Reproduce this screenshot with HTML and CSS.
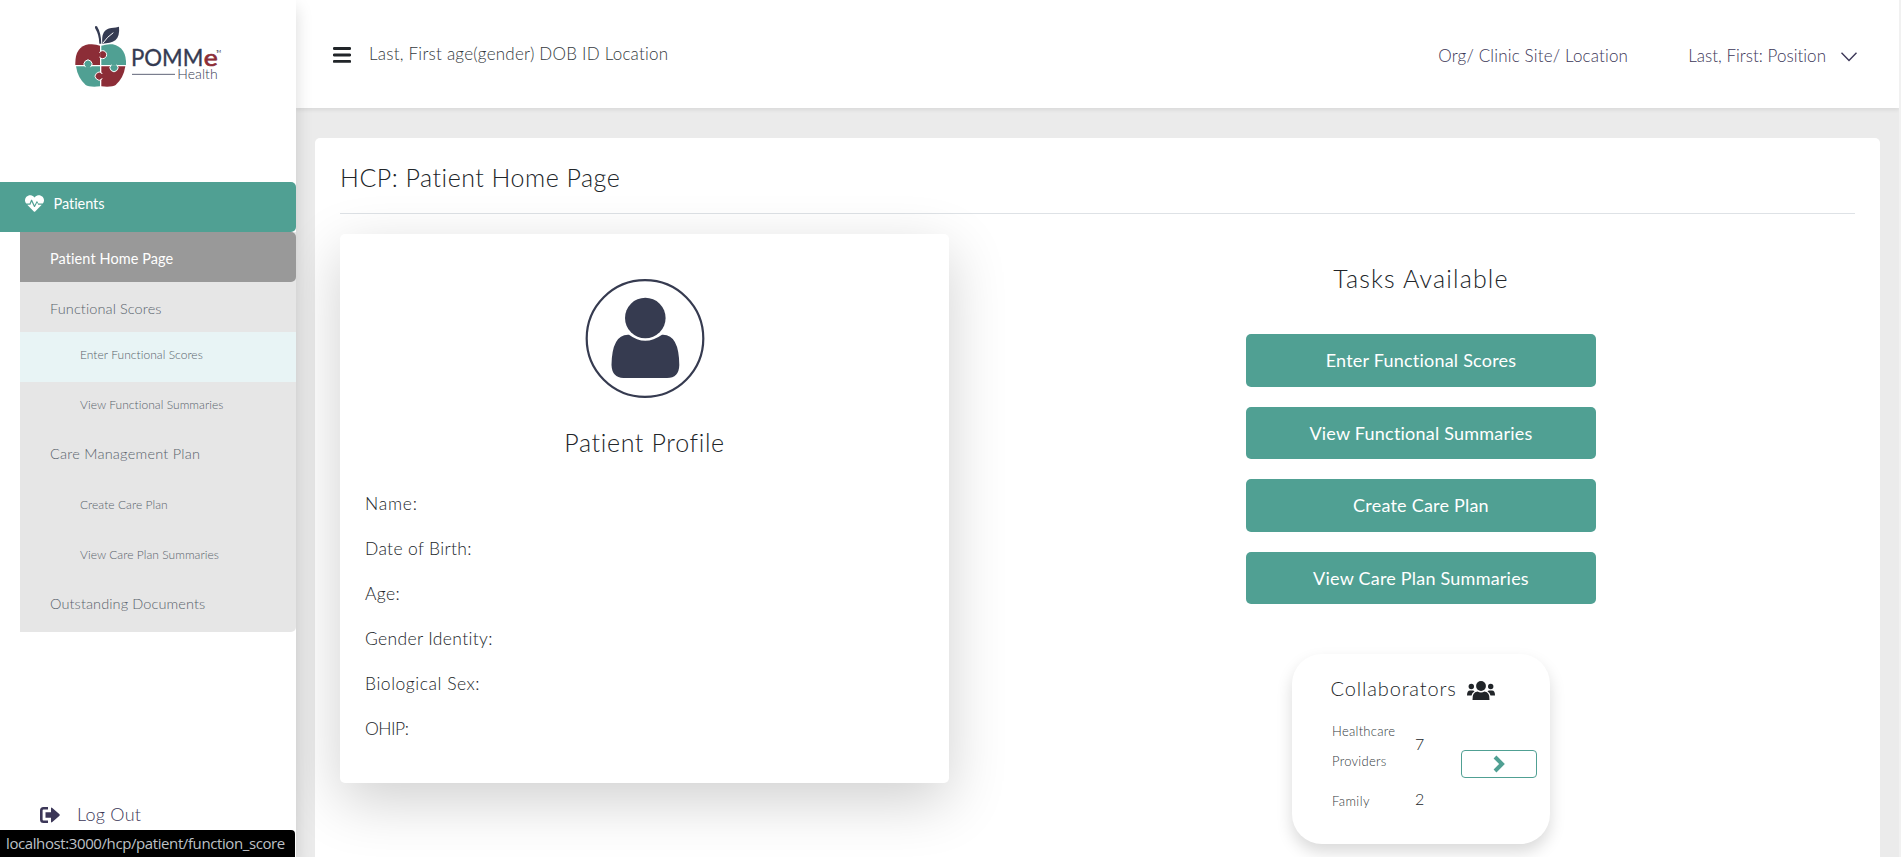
FILE: index.html
```html
<!DOCTYPE html>
<html lang="en">
<head>
<meta charset="utf-8">
<title>HCP: Patient Home Page</title>
<link rel="stylesheet" href="styles.css">
</head>
<body>
<div class="app">
  <aside class="sidebar">
    <svg class="logo" viewBox="225 75 450 195" width="150" height="65">
      <path d="M286 78 Q283 84 287 88 Q297 104 298 131 L304 131 Q303 98 291 79Z" fill="#353b52"/>
      <path d="M307 131 Q302 88 334 84 Q350 83 357 80 Q360 108 346 121 Q331 131 307 131Z" fill="#353b52"/>
      <path d="M309 129 Q322 110 340 98" stroke="#fff" stroke-width="3" fill="none"/>
      <path d="M300 137 Q286 131 266 133 Q224 140 226 195 H300Z" fill="#8c2d37"/>
      <path d="M304 137 Q322 131 338 133 Q380 142 378 195 H304Z" fill="#50a093"/>
      <path d="M228 199 Q233 234 257 255 Q268 262 300 259 V199Z" fill="#50a093"/>
      <path d="M376 199 Q371 234 347 255 Q336 262 304 259 V199Z" fill="#8c2d37"/>
      <path d="M299 156 A12 12 0 1 1 299 172Z" fill="#8c2d37" stroke="#fff" stroke-width="3"/>
      <path d="M255 200 A12 12 0 1 1 273 200Z" fill="#50a093" stroke="#fff" stroke-width="3"/>
      <path d="M333 195 A12 12 0 1 0 351 195Z" fill="#50a093" stroke="#fff" stroke-width="3"/>
      <path d="M306 220 A12 12 0 1 0 306 237Z" fill="#8c2d37" stroke="#fff" stroke-width="3"/>
      <path d="M296 158h5v12h-5zM303 222h6v13h-6z" fill="#8c2d37"/>
      <path d="M257 198h14v5h-14zM335 192h14v5h-14z" fill="#50a093"/>
      <text x="393" y="199" font-size="68" textLength="217" lengthAdjust="spacingAndGlyphs" fill="#353b52" stroke="#353b52" stroke-width="1">POMM</text>
      <text x="611" y="199" font-size="68" textLength="42" lengthAdjust="spacingAndGlyphs" fill="#8c2d37" stroke="#8c2d37" stroke-width="2">e</text>
      <text x="648" y="158" font-size="13" textLength="15" fill="#353b52">TM</text>
      <text x="532" y="236" font-size="42" class="thin" textLength="121" fill="#353b52">Health</text>
      <path d="M396 223H525" stroke="#5f6477" stroke-width="3"/>
    </svg>
    <nav class="menu">
      <a class="menu-top"><svg viewBox="0 0 512 512" width="19" height="19" fill="#fff"><path d="M320 243l-50 100c-6 12-23 12-29 0L177 211l-31 77H60l178 184c10 10 26 10 36 0l178-184h-96l-22-45zM474 74c-55-56-144-56-198-1l-20 20-20-20C182 18 93 18 38 74c-50 52-51 133-4 182h90l38-92c6-13 24-13 30 0l66 140 49-97c6-12 23-12 29 0l24 49h118c47-49 46-130-4-182z"/></svg><span>Patients</span></a>
      <div class="submenu">
        <a class="item active">Patient Home Page</a>
        <a class="item">Functional Scores</a>
        <a class="item sub hover">Enter Functional Scores</a>
        <a class="item sub">View Functional Summaries</a>
        <a class="item raised wide">Care Management Plan</a>
        <a class="item sub">Create Care Plan</a>
        <a class="item sub">View Care Plan Summaries</a>
        <a class="item raised">Outstanding Documents</a>
      </div>
    </nav>
    <a class="logout"><svg viewBox="0 0 20 16" width="20" height="16"><path d="M8 1.3H3.5Q1.3 1.3 1.3 3.5v9q0 2.2 2.2 2.2H8" fill="none" stroke="#3c3758" stroke-width="2.6"/><path d="M5.5 5.2H11V1.5Q11 0 12.3 1L19.5 7.3Q20 8 19.5 8.7L12.3 15Q11 16 11 14.5V10.8H5.5Z" fill="#3c3758"/></svg><span>Log Out</span></a>
  </aside>
  <div class="content">
    <header class="header">
      <svg class="burger" viewBox="0 0 18 16" width="18" height="16"><path d="M1.2 1.5H16.8M1.2 8H16.8M1.2 14.4H16.8" stroke="#212529" stroke-width="2.8" stroke-linecap="round"/></svg>
      <span class="patient">Last, First age(gender) DOB ID Location</span>
      <span class="org">Org/ Clinic Site/ Location</span>
      <span class="user">Last, First: Position</span>
      <svg class="chev" viewBox="0 0 16 10" width="16" height="10"><path d="M.5 .7 8 8.6 15.5 .7" fill="none" stroke="#3c3758" stroke-width="1.4"/></svg>
    </header>
    <main class="panel">
      <h1 class="title">HCP: Patient Home Page</h1>
      <div class="columns">
        <section class="profile">
          <svg class="avatar" viewBox="0 0 120 120" width="120" height="120"><circle cx="60" cy="60.500" r="58.3" fill="none" stroke="#363b50" stroke-width="2.2"/><circle cx="60.3" cy="40" r="20.3" fill="#363b50"/><path d="M44 56.700Q60 68.700 77 56.700Q94 55.700 94.300 87Q94 100 82 100H38.500Q27 99.700 26.500 87Q27 55.700 44 56.700Z" fill="#363b50"/></svg>
          <h2 class="heading">Patient Profile</h2>
          <ul class="fields">
            <li class="name">Name:</li>
            <li>Date of Birth:</li>
            <li>Age:</li>
            <li>Gender Identity:</li>
            <li class="sex">Biological Sex:</li>
            <li class="ohip">OHIP:</li>
          </ul>
        </section>
        <section class="tasks">
          <h2 class="heading spaced">Tasks Available</h2>
          <div class="buttons">
            <a class="btn">Enter Functional Scores</a>
            <a class="btn">View Functional Summaries</a>
            <a class="btn">Create Care Plan</a>
            <a class="btn">View Care Plan Summaries</a>
          </div>
          <div class="collab">
            <h3 class="collab-title"><span>Collaborators</span>
              <svg viewBox="0 0 28 19" width="28" height="19" fill="#212529"><circle cx="14" cy="5" r="4.9"/><circle cx="4.3" cy="5.5" r="2.7"/><circle cx="23.7" cy="5.5" r="2.7"/><path d="M5.5 19Q5 11 10.5 10.5 14 12.3 17.5 10.5 23 11 22.5 19ZM0 14.5Q0 9.5 3 9.5H5.8Q7 9.7 7.5 10.3 4.8 12 4.5 14.5ZM28 14.5Q28 9.5 25 9.5H22.2Q21 9.7 20.5 10.3 23.2 12 23.5 14.5Z"/></svg></h3>
            <div class="collab-body">
              <div class="labels"><p>Healthcare<br>Providers</p><p class="family">Family</p></div>
              <div class="counts"><p>7</p><p>2</p></div>
              <a class="go"><svg viewBox="0 0 12 18" width="12" height="18"><path d="M2 2 9 9 2 16" fill="none" stroke="#50a093" stroke-width="4"/></svg></a>
            </div>
          </div>
        </section>
      </div>
    </main>
  </div>
  <div class="gutter"></div>
</div>
<div class="status">localhost:3000/hcp/patient/function_score</div>
</body>
</html>
```
FILE: styles.css
```css
* { box-sizing: border-box; }
body { margin: 0; height: 857px; overflow: hidden; font-family: Lato, "Open Sans", sans-serif; font-weight: 300; color: #212529; background: #ebebeb; font-variant-ligatures: none; }
h1, h2, h3, p, ul { margin: 0; padding: 0; font-weight: 300; list-style: none; }
svg { display: block; flex: none; }
.app { display: flex; height: 857px; }
.sidebar { width: 296px; flex: none; background: #fff; display: flex; flex-direction: column; position: relative; z-index: 2; box-shadow: 0 8px 16px rgba(0,0,0,.15); }
.logo { margin: 25px 0 92px 75px; font-family: Lato, sans-serif; font-weight: 400; }
.logo .thin { font-weight: 300; }
.menu-top { display: flex; align-items: center; height: 50px; padding: 0 0 7px 25px; gap: 9.5px; background: #50a093; border-radius: 0 5px 5px 0; color: #fff; font-size: 14.5px; font-weight: 400; letter-spacing: -.05px; }
.submenu { margin-left: 20px; background: #e6e6e6; border-radius: 0 0 5px 0; }
.item { display: block; height: 50px; padding-left: 30px; line-height: 53px; font-size: 14.5px; letter-spacing: .11px; color: #59636c; white-space: nowrap; }
.item.active { background: #999; color: #fff; font-weight: 400; border-radius: 0 5px 5px 0; letter-spacing: .08px; }
.item.raised { line-height: 43px; }
.item.wide { letter-spacing: .24px; }
.item.sub { padding-left: 60px; font-size: 12px; line-height: 45px; letter-spacing: .05px; }
.item.hover { background: #e8f4f5; }
.logout { display: flex; align-items: center; gap: 17px; margin: 171px 0 0 40px; height: 24px; font-size: 18px; letter-spacing: .26px; color: #3c3758; }
.logout span { padding-bottom: 3px; }
.content { flex: 1; min-width: 0; display: flex; flex-direction: column; }
.header { height: 108px; flex: none; background: #fff; display: flex; align-items: flex-start; padding: 41px 42px 0 37px; font-size: 17px; line-height: 25px; color: #3c3758; box-shadow: 0 2px 4px rgba(0,0,0,.08); white-space: nowrap; }
.burger { margin: 6px 18px 0 0; }
.patient { color: #343a40; flex: 1; letter-spacing: .23px; }
.org { margin: 2px 60px 0 0; letter-spacing: .16px; }
.user { margin: 2px 15px 0 0; letter-spacing: .02px; }
.chev { margin-top: 11px; }
.panel { flex: 1; margin: 30px 19px 0; padding: 0 25px; background: #fff; border-radius: 5px 5px 0 0; }
.title { height: 76px; border-bottom: 1px solid #dee2e6; font-size: 25px; line-height: 79px; letter-spacing: .5px; }
.columns { display: flex; padding-top: 20px; }
.profile { width: 609px; height: 549px; border-radius: 5px; background: #fff; box-shadow: 0 18px 58px rgba(0,0,0,.19); }
.avatar { margin: 44px auto 29px; }
.heading { text-align: center; font-size: 25px; line-height: 30px; letter-spacing: .65px; }
.heading.spaced { letter-spacing: 1.16px; }
.fields { padding: 24px 0 0 25px; font-size: 17.5px; line-height: 45px; letter-spacing: .34px; }
.fields .name { letter-spacing: .8px; }
.fields .sex { letter-spacing: .54px; }
.fields .ohip { letter-spacing: -.5px; }
.tasks { flex: 1; margin-left: 38px; display: flex; flex-direction: column; align-items: center; padding-top: 29px; }
.buttons { display: flex; flex-direction: column; gap: 20px; margin-top: 41px; }
.btn { width: 350px; height: 52.5px; border-radius: 5px; background: #50a093; color: #fff; font-size: 18px; font-weight: 400; line-height: 53px; letter-spacing: .22px; text-align: center; }
.collab { width: 258px; height: 190px; margin-top: 50px; border-radius: 30px; box-shadow: 0 8px 16px rgba(0,0,0,.15); }
.collab-title { display: flex; align-items: center; gap: 10px; padding: 19px 0 0 38.5px; font-size: 20px; line-height: 30px; letter-spacing: .85px; }
.collab-title svg { margin-top: 4px; }
.collab-body { display: flex; padding-left: 40px; }
.labels { width: 83px; padding-top: 13px; font-size: 13px; line-height: 30px; letter-spacing: .27px; color: #343a40; }
.labels .family { margin-top: 10px; letter-spacing: .42px; }
.counts { width: 46px; font-size: 16px; line-height: 30px; padding-top: 26px; }
.counts p + p { margin-top: 25px; }
.go { width: 76px; height: 28px; margin-top: 47px; border: 1px solid #50a093; border-radius: 4px; display: flex; align-items: center; justify-content: center; }
.gutter { width: 2px; flex: none; background: #f1f1f1; }
.status { position: absolute; z-index: 3; left: 0; bottom: 0; width: 295px; height: 27px; padding-left: 6px; background: #000; color: #bdc1c6; border-radius: 0 4px 0 0; font: 400 15px/27px "Open Sans", sans-serif; letter-spacing: -.4px; white-space: nowrap; }
```
